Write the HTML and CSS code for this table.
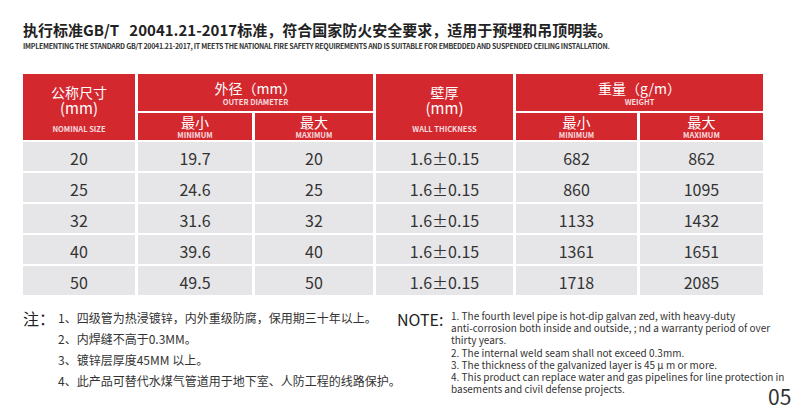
FILE: index.html
```html
<!DOCTYPE html>
<html lang="zh">
<head>
<meta charset="utf-8">
<title>规格参数</title>
<link rel="stylesheet" href="styles.css">
</head>
<body>
<div class="page">
  <header class="intro">
    <h1 class="title">执行标准GB/T&nbsp;&nbsp;&nbsp;20041.21-2017标准，符合国家防火安全要求，适用于预埋和吊顶明装。</h1>
    <p class="subtitle">IMPLEMENTING THE STANDARD GB/T 20041.21-2017, IT MEETS THE NATIONAL FIRE SAFETY REQUIREMENTS AND IS SUITABLE FOR EMBEDDED AND SUSPENDED CEILING INSTALLATION.</p>
  </header>

  <div class="spec">
    <div class="hd hd-tall c1">
      <span class="zh">公称尺寸</span>
      <span class="unit">(mm)</span>
      <span class="en en-gap">NOMINAL SIZE</span>
    </div>
    <div class="hd hd-group c23">
      <span class="zh">外径（mm）</span>
      <span class="en">OUTER DIAMETER</span>
    </div>
    <div class="hd hd-tall c4">
      <span class="zh">壁厚</span>
      <span class="unit">(mm)</span>
      <span class="en en-gap">WALL THICKNESS</span>
    </div>
    <div class="hd hd-group c56">
      <span class="zh">重量（g/m）</span>
      <span class="en">WEIGHT</span>
    </div>
    <div class="hd hd-sub"><span class="zh">最小</span><span class="en">MINIMUM</span></div>
    <div class="hd hd-sub"><span class="zh">最大</span><span class="en">MAXIMUM</span></div>
    <div class="hd hd-sub"><span class="zh">最小</span><span class="en">MINIMUM</span></div>
    <div class="hd hd-sub"><span class="zh">最大</span><span class="en">MAXIMUM</span></div>

    <div class="td">20</div><div class="td">19.7</div><div class="td">20</div><div class="td">1.6±0.15</div><div class="td">682</div><div class="td">862</div>
    <div class="td">25</div><div class="td">24.6</div><div class="td">25</div><div class="td">1.6±0.15</div><div class="td">860</div><div class="td">1095</div>
    <div class="td">32</div><div class="td">31.6</div><div class="td">32</div><div class="td">1.6±0.15</div><div class="td">1133</div><div class="td">1432</div>
    <div class="td">40</div><div class="td">39.6</div><div class="td">40</div><div class="td">1.6±0.15</div><div class="td">1361</div><div class="td">1651</div>
    <div class="td">50</div><div class="td">49.5</div><div class="td">50</div><div class="td">1.6±0.15</div><div class="td">1718</div><div class="td">2085</div>
  </div>

  <section class="notes">
    <div class="notes-cn">
      <span class="label-cn">注：</span>
      <ul class="list-cn">
        <li>1、四级管为热浸镀锌，内外重级防腐，保用期三十年以上。</li>
        <li>2、内焊缝不高于0.3MM。</li>
        <li>3、镀锌层厚度45MM 以上。</li>
        <li>4、此产品可替代水煤气管道用于地下室、人防工程的线路保护。</li>
      </ul>
    </div>
    <div class="notes-en">
      <span class="label-en">NOTE:</span>
      <div class="list-en">
        <span class="ln">1. The fourth level pipe is hot-dip galvan zed, with heavy-duty</span>
        <span class="ln">anti-corrosion both inside and outside, ; nd a warranty period of over</span>
        <span class="ln">thirty years.</span>
        <span class="ln">2. The internal weld seam shall not exceed 0.3mm.</span>
        <span class="ln">3. The thickness of the galvanized layer is 45 μ m or more.</span>
        <span class="ln">4. This product can replace water and gas pipelines for line protection in</span>
        <span class="ln">basements and civil defense projects.</span>
      </div>
    </div>
  </section>

  <div class="page-no">05</div>
</div>
</body>
</html>
```

FILE: styles.css
```css
* { box-sizing: border-box; }

html, body {
  margin: 0;
  padding: 0;
  background: #ffffff;
}

body {
  font-family: "Noto Sans CJK SC", "Noto Sans", sans-serif;
  color: #333333;
}

.page {
  position: relative;
  width: 800px;
  height: 418px;
  padding: 20px 0 0 23px;
  overflow: hidden;
}

.title {
  margin: 0;
  font-size: 15px;
  line-height: 20px;
  font-weight: 700;
  color: #222222;
  white-space: nowrap;
}

.subtitle {
  margin: 2px 0 0;
  font-size: 7px;
  line-height: 9px;
  font-weight: 700;
  color: #333333;
  white-space: nowrap;
  letter-spacing: -0.25px;
}

.spec {
  margin-top: 23px;
  display: grid;
  grid-template-columns: 112px 114px 118px 137px 121px 123px;
  grid-template-rows: 37px 27px repeat(5, 29px);
  column-gap: 3px;
  row-gap: 2px;
}

.hd {
  background: #d4282f;
  color: #ffffff;
  display: flex;
  flex-direction: column;
  align-items: center;
  justify-content: center;
  text-align: center;
}

.c1 { grid-column: 1; grid-row: 1 / 3; }
.c23 { grid-column: 2 / 4; grid-row: 1; }
.c4 { grid-column: 4; grid-row: 1 / 3; }
.c56 { grid-column: 5 / 7; grid-row: 1; }

.hd .zh {
  font-size: 14px;
  line-height: 16px;
}

.hd .unit {
  font-size: 15px;
  line-height: 16px;
}

.hd .en {
  font-size: 7.5px;
  line-height: 9px;
  font-weight: 700;
  color: rgba(255, 255, 255, 0.85);
}

.hd-group .en {
  margin-top: 1px;
}

.hd .en-gap {
  margin-top: 8px;
}

.hd-tall {
  padding-top: 2px;
}

.hd-sub {
  padding-top: 1px;
}

.hd-sub .zh {
  line-height: 14px;
}

.hd-sub .en {
  margin-top: 2px;
  line-height: 8px;
}

.td {
  background: #e6e6e8;
  display: flex;
  align-items: center;
  justify-content: center;
  padding-top: 2px;
  font-size: 16px;
  color: #333333;
}

.notes {
  margin-top: 12px;
  display: grid;
  grid-template-columns: 374px 1fr;
}

.notes-cn {
  display: flex;
}

.label-cn {
  width: 35px;
  flex: none;
  font-size: 16px;
  line-height: 23px;
  color: #222222;
}

.list-cn {
  margin: 0;
  padding: 0;
  list-style: none;
  font-size: 12px;
  line-height: 21px;
  color: #333333;
  white-space: nowrap;
}

.notes-en {
  display: flex;
}

.label-en {
  width: 54px;
  flex: none;
  font-size: 16px;
  line-height: 24px;
  color: #222222;
}

.list-en {
  padding-top: 3px;
  font-size: 10px;
  line-height: 12.2px;
  color: #333333;
  white-space: nowrap;
}

.list-en .ln {
  display: block;
}

.page-no {
  position: absolute;
  left: 768px;
  top: 384px;
  font-size: 21px;
  line-height: 24px;
  color: #333333;
}
```
